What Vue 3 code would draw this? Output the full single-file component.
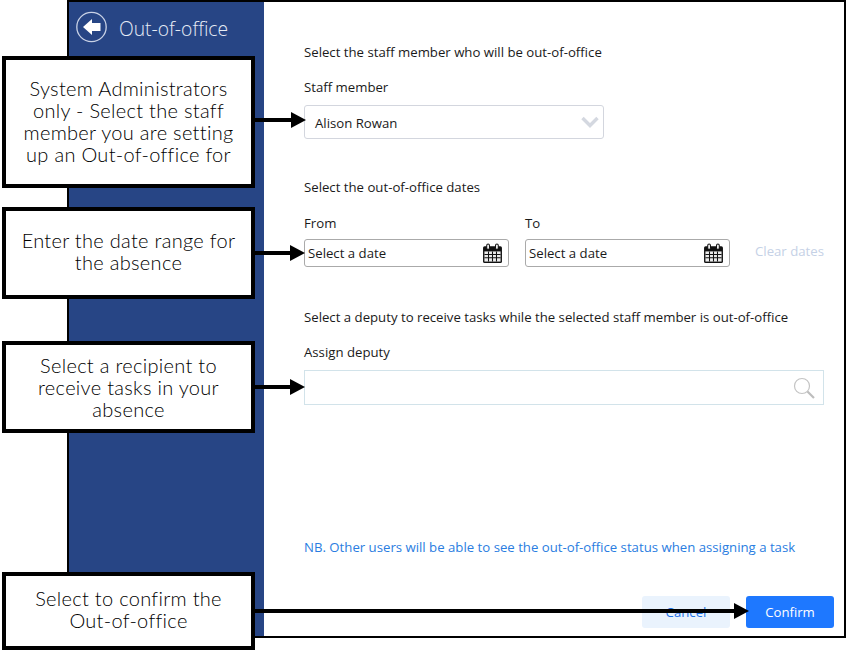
<template>
  <div class="stage">
    <div class="window">
      <aside class="sidebar">
        <button class="back" aria-label="Back">
          <svg width="32" height="32" viewBox="0 0 32 32">
            <circle cx="15.5" cy="16" r="14.7" fill="none" stroke="#c9d2e6" stroke-width="1.3" />
            <path d="M7 16 L16 8 V12 H24.5 V20 H16 V24 Z" fill="#fff" />
          </svg>
        </button>
        <h1 class="title">Out-of-office</h1>
      </aside>
      <main class="form">
        <p class="heading first">Select the staff member who will be out-of-office</p>
        <label class="label staff-label">Staff member</label>
        <div class="select">
          <span class="select-value">Alison Rowan</span>
          <svg width="18" height="12" viewBox="0 0 18 12">
            <path d="M1.5 2 L9 9.5 L16.5 2" fill="none" stroke="#d4d8e0" stroke-width="3.4" />
          </svg>
        </div>
        <p class="heading dates-heading">Select the out-of-office dates</p>
        <div class="dates">
          <div v-for="d in dateFields" :key="d" class="date-field">
            <label class="label">{{ d }}</label>
            <div class="date-input">
              <span>Select a date</span>
              <svg width="21" height="21" viewBox="0 0 20 20">
                <rect x="1" y="3" width="18" height="16" rx="1.5" fill="#111" />
                <path d="M2.3 8h15.4v9.7H2.3z" fill="#ececec" />
                <path d="M2.3 11h15.4M2.3 14h15.4M6.2 8v9.7M10 8v9.7M13.8 8v9.7" stroke="#111" stroke-width="1" />
                <rect x="4.5" y="1" width="2.6" height="5" rx="1.3" fill="#fff" stroke="#111" />
                <rect x="12.9" y="1" width="2.6" height="5" rx="1.3" fill="#fff" stroke="#111" />
              </svg>
            </div>
          </div>
          <span class="clear">Clear dates</span>
        </div>
        <p class="heading deputy-heading">Select a deputy to receive tasks while the selected staff member is out-of-office</p>
        <label class="label deputy-label">Assign deputy</label>
        <div class="search">
          <svg width="24" height="24" viewBox="0 0 24 24">
            <circle cx="10" cy="10" r="7.5" fill="none" stroke="#c4c4c4" stroke-width="1.2" />
            <path d="M15.5 15.5 L22 22" stroke="#bdbdbd" stroke-width="2.2" />
          </svg>
        </div>
        <p class="note">NB. Other users will be able to see the out-of-office status when assigning a task</p>
        <div class="actions">
          <button class="btn cancel">Cancel</button>
          <button class="btn confirm">Confirm</button>
        </div>
      </main>
    </div>

    <div v-for="c in callouts" :key="c.cls" class="callout" :class="c.cls">
      <span>{{ c.text }}</span>
    </div>

    <svg class="arrows" width="846" height="652" viewBox="0 0 846 652">
      <g v-for="a in arrows" :key="a.y">
        <rect x="254" :y="a.y - 2" :width="a.tip - 268" height="4" fill="#000" />
        <path :d="`M${a.tip} ${a.y} L${a.tip - 15} ${a.y - 8} V${a.y + 8} Z`" fill="#000" />
      </g>
    </svg>
  </div>
</template>

<script setup>
const dateFields = ['From', 'To']
const callouts = [
  { cls: 'c1', text: 'System Administrators only - Select the staff member you are setting up an Out-of-office for' },
  { cls: 'c2', text: 'Enter the date range for the absence' },
  { cls: 'c3', text: 'Select a recipient to receive tasks in your absence' },
  { cls: 'c4', text: 'Select to confirm the Out-of-office' }
]
const arrows = [
  { y: 120, tip: 306 },
  { y: 253, tip: 305 },
  { y: 387, tip: 305 },
  { y: 611, tip: 749 }
]
</script>

<style>
html, body { margin: 0; background: #fff; }
</style>

<style scoped>
.stage {
  position: relative;
  width: 846px;
  height: 652px;
  overflow: hidden;
  background: #fff;
  font-family: "Open Sans", "Noto Sans", sans-serif;
  color: #1a1a1a;
}
.window {
  margin-left: 67px;
  width: 779px;
  height: 638px;
  box-sizing: border-box;
  border: 2px solid #000;
  display: flex;
  background: #fff;
}
.sidebar {
  width: 195px;
  flex: none;
  background: #274585;
  display: flex;
  align-items: flex-start;
  gap: 11px;
  padding: 9px 0 0 7px;
  box-sizing: border-box;
}
.back {
  border: 0;
  padding: 0;
  background: none;
  display: flex;
}
.title {
  margin: 5px 0 0;
  font-size: 19.3px;
  font-weight: 300;
  line-height: 26px;
  color: #e6ebf5;
}
.form {
  flex: 1;
  display: flex;
  flex-direction: column;
  padding: 0 20px 8px 40px;
  box-sizing: border-box;
  font-size: 13.2px;
}
.heading, .label, .note {
  margin: 0;
  line-height: 18px;
  display: block;
}
.first { margin-top: 41px; }
.staff-label { margin-top: 17px; }
.select {
  margin-top: 9px;
  width: 300px;
  height: 34px;
  box-sizing: border-box;
  border: 1px solid #d3d6de;
  border-radius: 3px;
  display: flex;
  align-items: center;
  justify-content: space-between;
  padding: 0 4px 0 10px;
}
.select-value { padding-top: 2px; }
.dates-heading { margin-top: 39px; }
.dates {
  margin-top: 18px;
  display: flex;
  align-items: flex-end;
  gap: 16px;
}
.date-field { width: 205px; }
.date-input {
  margin-top: 7px;
  height: 28px;
  box-sizing: border-box;
  border: 1px solid #aaa;
  border-radius: 3px;
  display: flex;
  align-items: center;
  justify-content: space-between;
  padding: 0 5px 0 3px;
}
.clear {
  margin-left: 9px;
  margin-bottom: 2px;
  line-height: 28px;
  color: #c5d1e6;
}
.deputy-heading { margin-top: 41px; }
.deputy-label { margin-top: 17px; }
.search {
  margin-top: 9px;
  height: 35px;
  box-sizing: border-box;
  border: 1px solid #d2e3ea;
  display: flex;
  align-items: center;
  justify-content: flex-end;
  padding-right: 7px;
}
.note {
  margin-top: auto;
  color: #2a7de1;
}
.actions {
  margin-top: 40px;
  display: flex;
  justify-content: flex-end;
  gap: 16px;
  margin-right: -10px;
}
.btn {
  width: 88px;
  height: 32px;
  border: 0;
  border-radius: 3px;
  font: inherit;
}
.cancel { background: #eaf3fd; color: #1f74e8; }
.confirm { background: #1e78ff; color: #fff; }

.callout {
  position: absolute;
  left: 2px;
  width: 253px;
  box-sizing: border-box;
  border: 4px solid #000;
  background: #fff;
  display: flex;
  align-items: center;
  justify-content: center;
  padding: 0 16px;
  text-align: center;
  font-family: "Lato", sans-serif;
  font-weight: 300;
  letter-spacing: 0.3px;
  font-size: 20px;
  line-height: 22px;
  color: #000;
}
.c1 { top: 56px; height: 132px; padding-bottom: 2px; }
.c2 { top: 207px; height: 92px; padding: 0 6px 4px; }
.c3 { top: 341px; height: 92px; }
.c4 { top: 572px; height: 78px; padding-bottom: 4px; }
.arrows {
  position: absolute;
  left: 0;
  top: 0;
  pointer-events: none;
}
</style>
